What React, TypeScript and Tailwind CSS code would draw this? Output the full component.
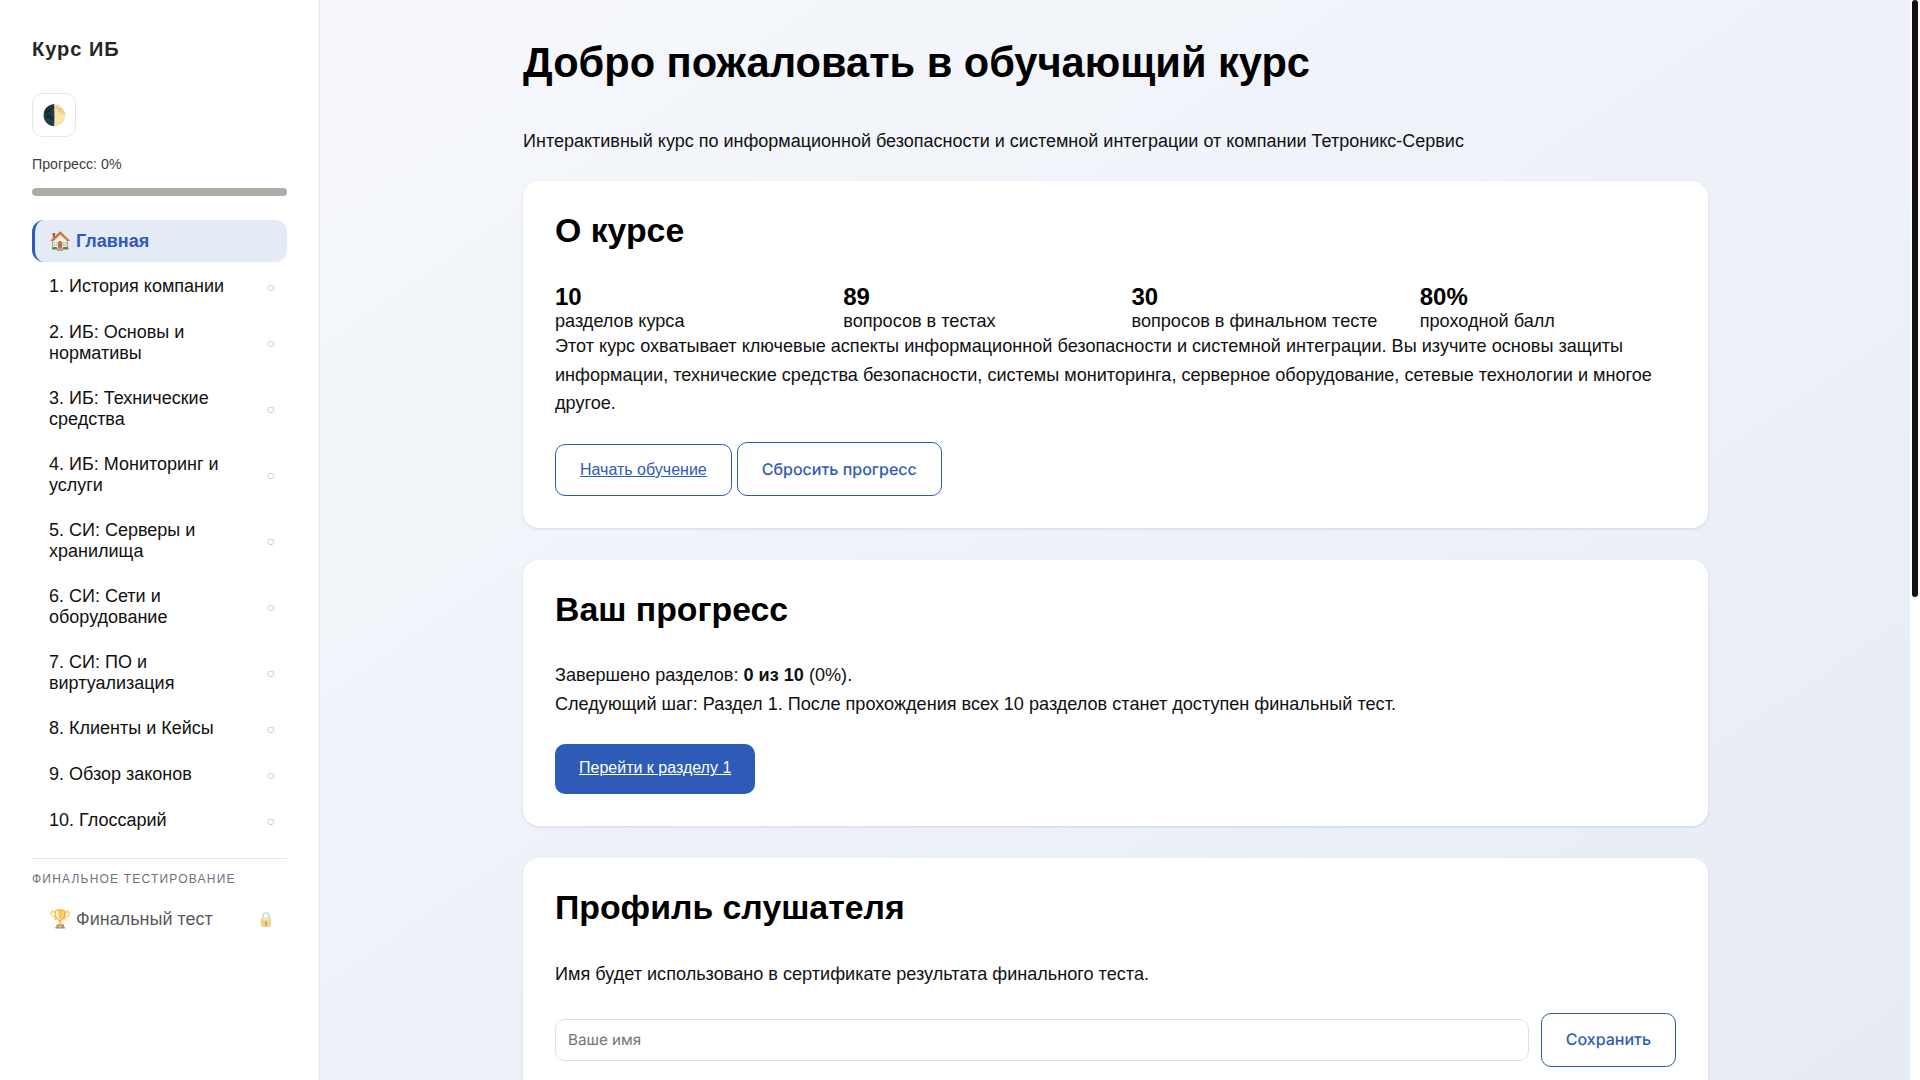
const sections = [
  '1. История компании',
  '2. ИБ: Основы и нормативы',
  '3. ИБ: Технические средства',
  '4. ИБ: Мониторинг и услуги',
  '5. СИ: Серверы и хранилища',
  '6. СИ: Сети и оборудование',
  '7. СИ: ПО и виртуализация',
  '8. Клиенты и Кейсы',
  '9. Обзор законов',
  '10. Глоссарий',
];

const stats = [
  { value: '10', label: 'разделов курса' },
  { value: '89', label: 'вопросов в тестах' },
  { value: '30', label: 'вопросов в финальном тесте' },
  { value: '80%', label: 'проходной балл' },
];

function Sidebar() {
  return (
    <aside className="w-[320px] shrink-0 h-screen bg-white border-r border-[#e5e7eb] px-8 pt-[33px] flex flex-col">
      <h3 className="text-[20px] leading-[32px] font-bold tracking-[1px] text-[#262626]">Курс ИБ</h3>
      <button className="mt-[28px] w-11 h-11 flex items-center justify-center rounded-[10px] border border-[#e5e7eb] bg-white text-[20px] leading-none">
        🌓
      </button>
      <div className="mt-[16px] text-[14.2px] leading-[22px] text-[#404040]">Прогресс: 0%</div>
      <div className="mt-[13px] h-2 w-full rounded bg-[#b0aca5]" />
      <nav className="mt-[24px] flex flex-col gap-[4px]">
        <a className="flex items-center h-[42px] pl-[14px] pr-[14px] rounded-[12px] border-l-[3px] border-[#2e5bb8] bg-[#e4eaf6] text-[18px] font-bold text-[#2e5bb8]">
          🏠 Главная
        </a>
        {sections.map((s) => (
          <a key={s} className="flex items-start justify-between min-h-[42px] pl-[17px] pr-[12px] py-[10px] text-[18px] leading-[21px] text-[#111]">
            <span className="w-[200px]">{s}</span>
            <span className="self-center text-[14px] text-[#b8bcc6]">○</span>
          </a>
        ))}
      </nav>
      <div className="mt-[16px] border-t border-[#e5e7eb] pt-[10px]">
        <div className="text-[12px] leading-[20px] tracking-[1.2px] uppercase text-[#6b7280]">Финальное тестирование</div>
        <a className="mt-[10px] flex items-center justify-between pl-[17px] pr-[12px] py-[10px] text-[18px] leading-[21px] text-[#111] opacity-70">
          <span>🏆 Финальный тест</span>
          <span className="text-[14.4px] opacity-70">🔒</span>
        </a>
      </div>
    </aside>
  );
}

function Scrollbar() {
  return (
    <div className="w-[10px] shrink-0 h-screen bg-white px-[2px]">
      <div className="h-[597px] rounded-[3px] bg-[#111]" />
    </div>
  );
}

export default function App() {
  return (
    <div className="flex h-screen overflow-hidden font-['Liberation_Sans',sans-serif] text-[#111] text-[18px] leading-[28.8px]">
      <Sidebar />
      <main className="flex-1 overflow-hidden pl-[1px] bg-gradient-to-br from-[#f6f8fc] to-[#e6ebf4]">
        <div className="w-[1185px] mx-auto pt-[38px]">
          <h1 className="text-[41.6px] leading-[50px] font-bold text-black">Добро пожаловать в обучающий курс</h1>
          <p className="mt-[39px]">Интерактивный курс по информационной безопасности и системной интеграции от компании Тетроникс-Сервис</p>

          <section className="mt-[25px] bg-white rounded-[16px] p-8 text-[18.1px] shadow-[0_1px_3px_rgba(0,0,0,0.1)]">
            <h2 className="text-[33.8px] leading-[34px] font-bold text-black">О курсе</h2>
            <div className="mt-[35px] grid grid-cols-4 gap-8">
              {stats.map((s) => (
                <div key={s.value}>
                  <div className="text-[24px] leading-[29px] font-bold text-black">{s.value}</div>
                  <div className="leading-[21px]">{s.label}</div>
                </div>
              ))}
            </div>
            <p>
              Этот курс охватывает ключевые аспекты информационной безопасности и системной интеграции. Вы изучите основы защиты информации, технические средства безопасности, системы мониторинга, серверное оборудование, сетевые технологии и многое другое.
            </p>
            <div className="mt-[24px] flex items-end gap-[5px]">
              <a className="px-[24px] h-[52px] flex items-center rounded-[10px] border border-[#2e5bb8] bg-white text-[16px] text-[#2e5bb8] underline">Начать обучение</a>
              <button className="px-[24px] h-[54px] rounded-[10px] border border-[#2e5bb8] bg-white font-['Inter',sans-serif] [text-rendering:geometricPrecision] text-[16px] font-medium text-[#2e5bb8]">Сбросить прогресс</button>
            </div>
          </section>

          <section className="mt-[32px] bg-white rounded-[16px] p-8 text-[18.1px] shadow-[0_1px_3px_rgba(0,0,0,0.1)]">
            <h2 className="text-[33.8px] leading-[34px] font-bold text-black">Ваш прогресс</h2>
            <p className="mt-[35px]">Завершено разделов: <b className="font-bold">0 из 10</b> (0%).</p>
            <p>Следующий шаг: Раздел 1. После прохождения всех 10 разделов станет доступен финальный тест.</p>
            <a className="mt-[25px] inline-flex items-center h-[50px] px-[24px] rounded-[10px] bg-[#2e5bb8] text-[16px] text-white underline">Перейти к разделу 1</a>
          </section>

          <section className="mt-[32px] bg-white rounded-[16px] p-8 text-[18.1px] shadow-[0_1px_3px_rgba(0,0,0,0.1)]">
            <h2 className="text-[33.8px] leading-[34px] font-bold text-black">Профиль слушателя</h2>
            <p className="mt-[36px]">Имя будет использовано в сертификате результата финального теста.</p>
            <div className="mt-[24px] flex items-center gap-3">
              <input placeholder="Ваше имя" className="flex-1 h-[42px] px-3 rounded-[10px] border border-[#e0e0e0] font-['Inter',sans-serif] [text-rendering:geometricPrecision] text-[15.2px] placeholder:text-[#757575]" />
              <button className="px-[24px] h-[54px] rounded-[10px] border border-[#2e5bb8] bg-white font-['Inter',sans-serif] [text-rendering:geometricPrecision] text-[16px] font-medium text-[#2e5bb8]">Сохранить</button>
            </div>
          </section>
        </div>
      </main>
      <Scrollbar />
    </div>
  );
}
